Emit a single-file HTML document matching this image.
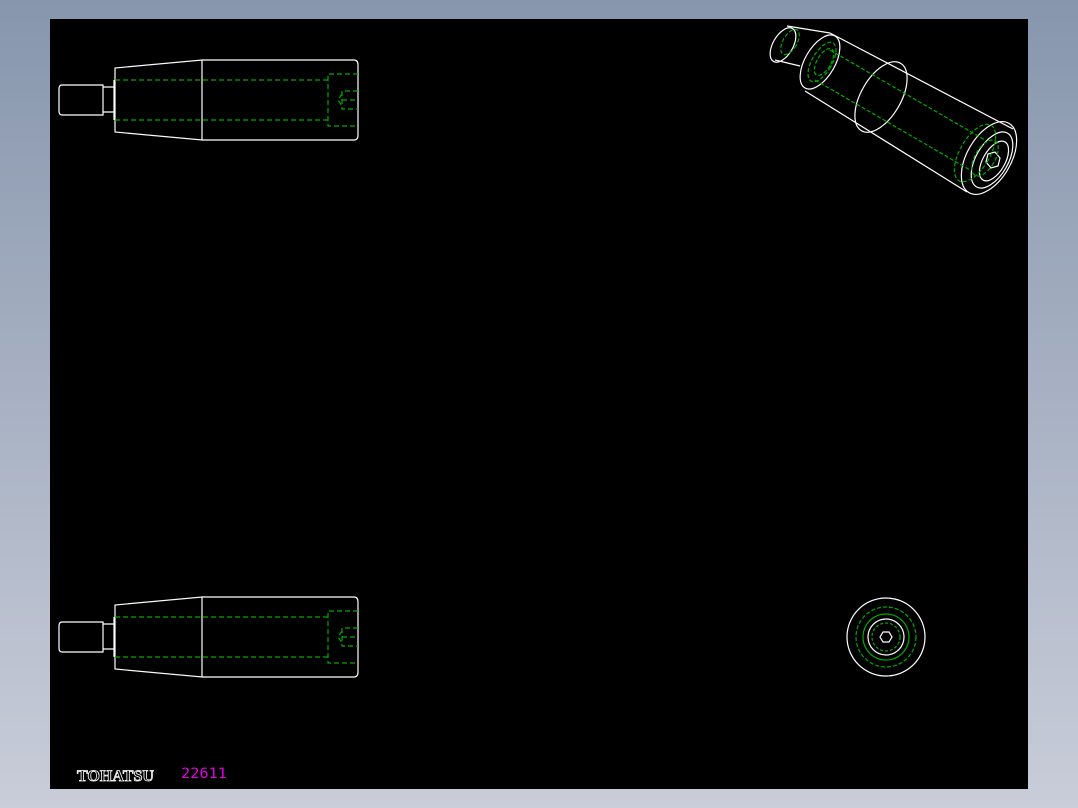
<!DOCTYPE html>
<html><head><style>
html,body{margin:0;padding:0;}
body{width:1078px;height:808px;background:linear-gradient(#8796ad,#c9cdd9);position:relative;overflow:hidden;}
svg{position:absolute;left:0;top:0;}
</style></head><body>
<svg width="1078" height="808" viewBox="0 0 1078 808">
<rect x="50" y="19" width="978" height="770" fill="#000"/>
<defs>
<g id="h" fill="none" stroke-width="1.2">
<g stroke="#fff">
<path d="M62,85 H103 V115 H62 Q59,115 59,111 V89 Q59,85 62,85 Z"/>
<path d="M103,87 H114 M103,112 H114"/>
<path d="M114,80 V120"/>
<path d="M115,68 V132 L202,140 V60 Z"/>
<path d="M202,60 H354 Q358,60 358,65 V135 Q358,140 354,140 H202"/>
</g>
<g stroke="#0a0" stroke-dasharray="5,3">
<path d="M115,80 H328 M115,120 H328"/>
<path d="M358,74 H328 V126 H358"/>
<path d="M358,91 H342 V109 H358 M342,100 H358 M342,94 L338,100 L342,106"/>
</g>
</g>
</defs>
<use href="#h"/>
<use href="#h" transform="translate(0,537)"/>
<g fill="none" stroke-width="1.2">
<g stroke="#fff">
<ellipse cx="783" cy="45" rx="10" ry="19" transform="rotate(30 783 45)"/>
<path d="M787,26 L830,33 M775,60 L800,66"/>
<ellipse cx="820" cy="62" rx="15" ry="30" transform="rotate(30 820 62)"/>
<ellipse cx="881" cy="97" rx="20" ry="39" transform="rotate(30 881 97)"/>
<path d="M830,33 L1013,129 M805,91 L967,192"/>
<ellipse cx="989" cy="158" rx="22" ry="40" transform="rotate(30 989 158)"/>
<ellipse cx="992" cy="160" rx="16" ry="31" transform="rotate(30 992 160)"/>
<ellipse cx="994" cy="161" rx="11" ry="22" transform="rotate(30 994 161)"/>
<path d="M988,154 L995,152 L1000,158 L998,166 L991,168 L986,162 Z"/>
</g>
<g stroke="#0a0" stroke-dasharray="4,2">
<ellipse cx="790" cy="42" rx="7" ry="14" transform="rotate(30 790 42)"/>
<ellipse cx="822" cy="62" rx="10" ry="22" transform="rotate(30 822 62)"/>
<ellipse cx="824" cy="62" rx="7" ry="15" transform="rotate(30 824 62)"/>
<path d="M830,50 L985,140 M815,80 L970,170"/>
<ellipse cx="975" cy="153" rx="15" ry="32" transform="rotate(30 975 153)"/>
<ellipse cx="985" cy="158" rx="10" ry="20" transform="rotate(30 985 158)"/>
</g>
</g>
<g fill="none" stroke-width="1.2">
<circle cx="886" cy="637" r="39" stroke="#fff"/>
<circle cx="886" cy="637" r="30" stroke="#0a0" stroke-dasharray="4,2"/>
<circle cx="886" cy="637" r="23" stroke="#0a0"/>
<circle cx="886" cy="637" r="18" stroke="#fff"/>
<circle cx="886" cy="637" r="14" stroke="#0a0" stroke-dasharray="3,2"/>
<path d="M880,637 L883,632 L889,632 L892,637 L889,642 L883,642 Z" stroke="#fff"/>
</g>
<text x="77" y="781" font-family="Liberation Serif,serif" font-weight="bold" font-size="16" fill="#000" stroke="#fff" stroke-width="0.8" textLength="77" lengthAdjust="spacingAndGlyphs">TOHATSU</text>
<text x="181" y="778" font-family="DejaVu Sans Mono,monospace" font-size="14" fill="#e000e0" textLength="46" lengthAdjust="spacingAndGlyphs">22611</text>
</svg>
</body></html>
